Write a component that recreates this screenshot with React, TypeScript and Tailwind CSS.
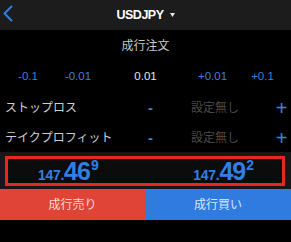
import React from "react";

const font = { fontFamily: '"Liberation Sans", "Noto Sans CJK JP", sans-serif' };

function Price({ main, big, sup }: { main: string; big: string; sup: string }) {
  return (
    <div className="flex items-baseline text-[#2f80e6] font-bold leading-none">
      <span className="text-[14px] tracking-[-0.3px]">{main}</span>
      <span className="text-[25px] tracking-[-1px]">{big}</span>
      <span className="text-[14px] self-start ml-[1px] -mt-[1px]">{sup}</span>
    </div>
  );
}

function Row({ label }: { label: string }) {
  return (
    <div className="flex items-center h-full pl-[5px] pr-[3px]">
      <div className="w-[141px] text-[12px] text-[#cfcfcf] leading-none">{label}</div>
      <div className="w-[9px] text-center text-[#3b82dc] font-bold text-[15px] leading-none">-</div>
      <div className="flex-1 text-center text-[12px] text-[#4a4a4a] leading-none">設定無し</div>
      <div className="w-[13px] text-center text-[#3b82dc] text-[20px] leading-none">+</div>
    </div>
  );
}

export default function App() {
  return (
    <div className="w-[291px] h-[242px] bg-black overflow-hidden" style={font}>
      {/* Header */}
      <div className="relative h-[30px] bg-[#1c1c1c] flex items-center justify-center">
        <svg className="absolute left-[2px] top-[5px]" width="12" height="17" viewBox="0 0 12 17">
          <path d="M9.5 1.5 L2.5 8.5 L9.5 15.5" fill="none" stroke="#2f7fe0" strokeWidth="2" strokeLinecap="round" strokeLinejoin="round" />
        </svg>
        <div className="flex items-center">
          <span className="text-white font-bold text-[12.5px] tracking-[-0.5px] leading-none">USDJPY</span>
          <svg className="ml-[6px]" width="5" height="4" viewBox="0 0 5 4">
            <path d="M0 0 H5 L2.5 4 Z" fill="#e6e6e6" />
          </svg>
        </div>
      </div>

      {/* Title */}
      <div className="h-[32px] flex items-center justify-center text-[12px] text-[#c8c8c8] leading-none">
        成行注文
      </div>

      {/* Step row */}
      <div className="h-[30px] flex items-center text-[11.5px] leading-none">
        <div className="w-[56px] text-center text-[#3b82dc]">-0.1</div>
        <div className="w-[44px] text-center text-[#3b82dc]">-0.01</div>
        <div className="w-[91px] text-center text-[#e8e8e8]">0.01</div>
        <div className="w-[43px] text-center text-[#3b82dc]">+0.01</div>
        <div className="w-[57px] text-center text-[#3b82dc]">+0.1</div>
      </div>

      {/* SL / TP rows */}
      <div className="h-[31px]">
        <Row label="ストップロス" />
      </div>
      <div className="h-[29px]">
        <Row label="テイクプロフィット" />
      </div>

      {/* Price band */}
      <div className="h-[37px] bg-[#171717] pt-[4px] pl-[5px] pr-[6px]">
        <div className="h-[30px] border-[3px] border-[#e8281e] bg-[#0c0c0c] flex items-center justify-between pl-[30px] pr-[28px]">
          <Price main="147." big="46" sup="9" />
          <Price main="147." big="49" sup="2" />
        </div>
      </div>

      {/* Buttons */}
      <div className="h-[31px] flex">
        <div className="w-[145px] bg-[#e04437] flex items-center justify-center text-[12px] text-[#f6d9d5] leading-none">
          成行売り
        </div>
        <div className="flex-1 bg-[#2f7be0] flex items-center justify-center text-[12px] text-[#d9e8fb] leading-none">
          成行買い
        </div>
      </div>
    </div>
  );
}
